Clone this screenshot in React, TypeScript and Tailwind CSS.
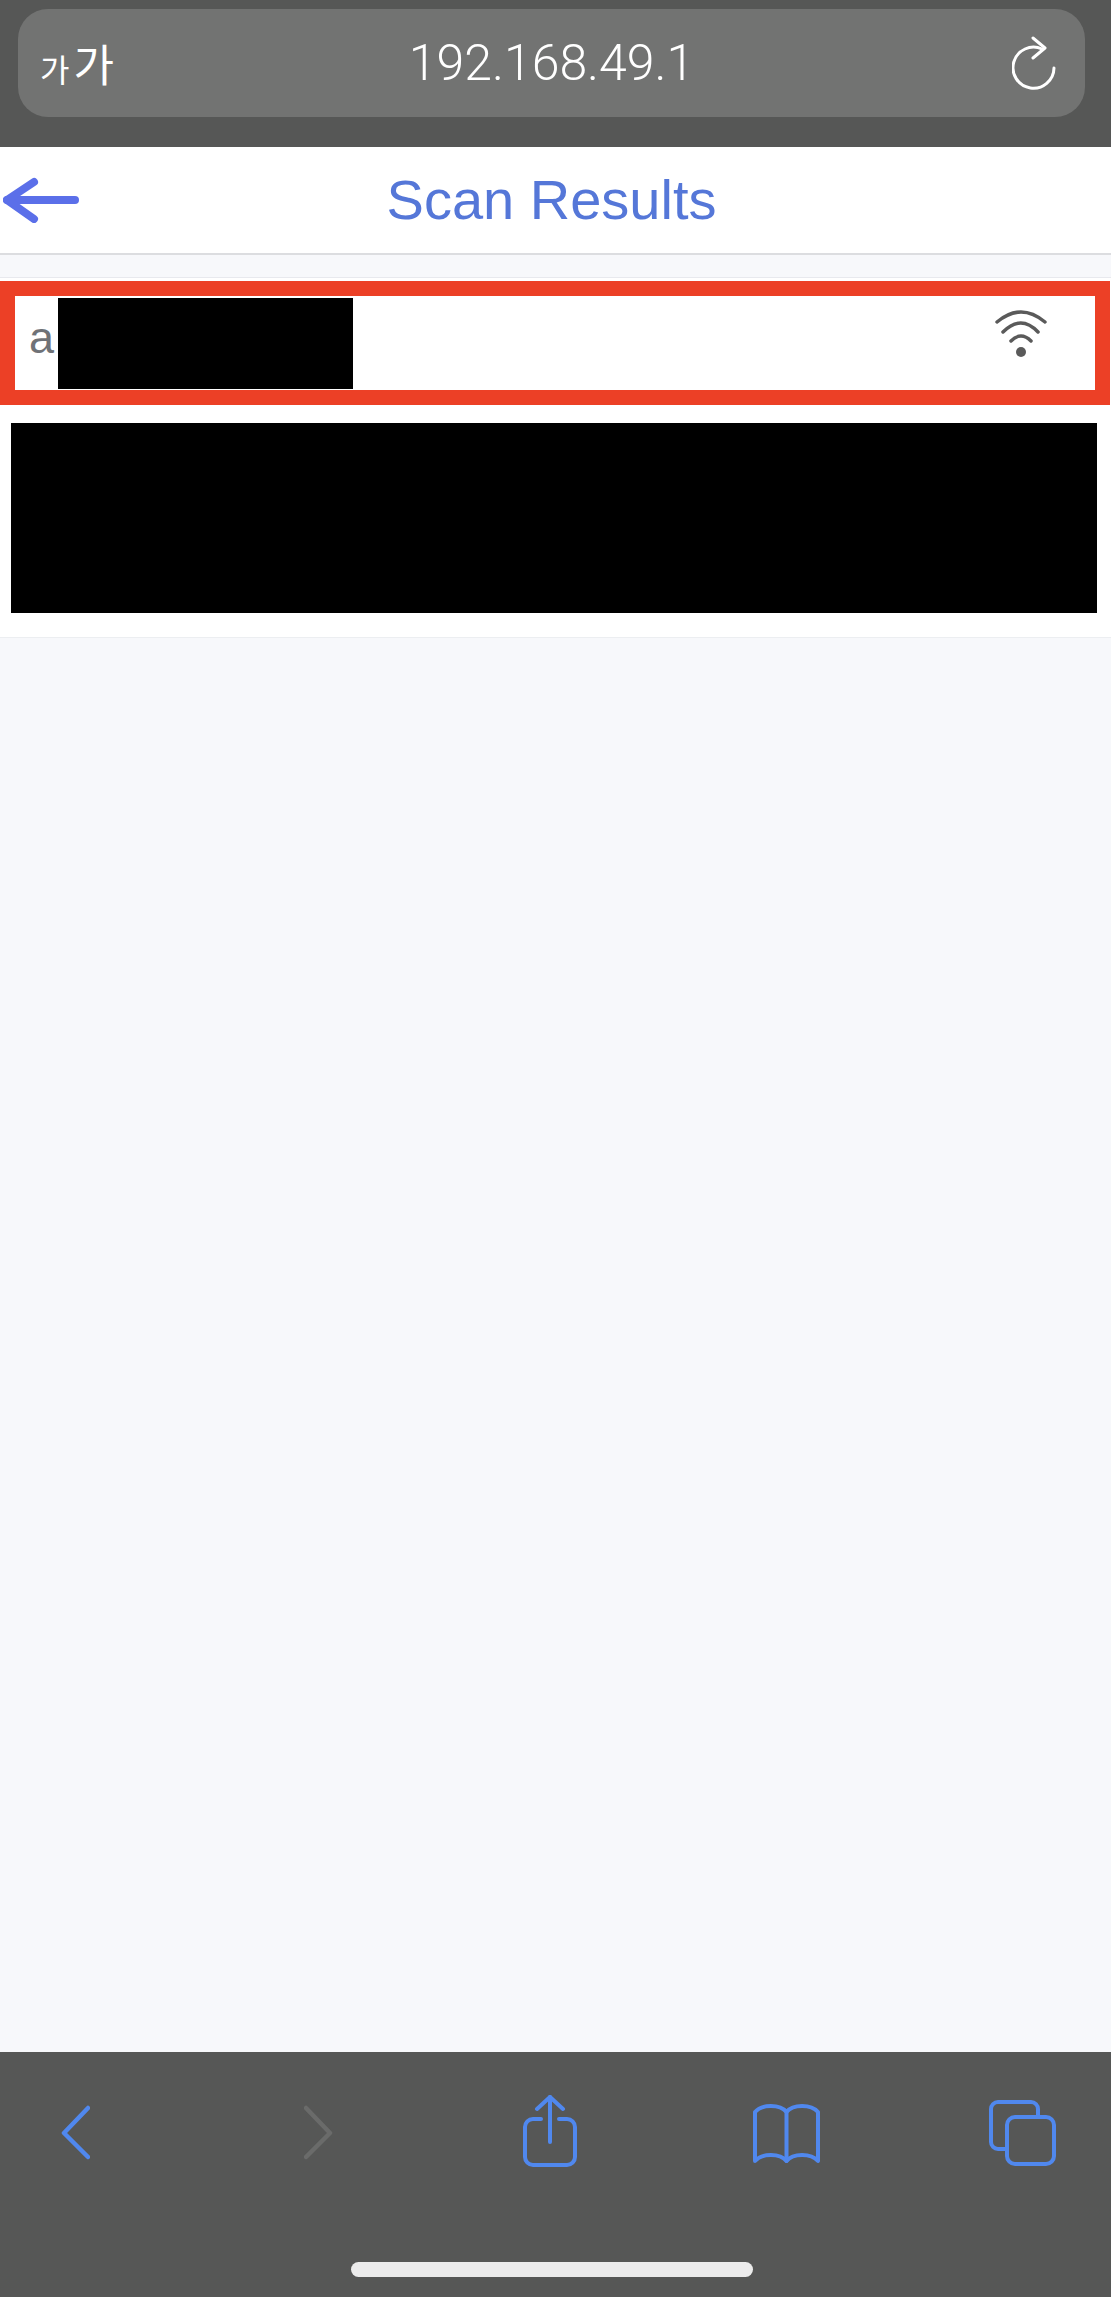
import React from "react";

const sans = "font-['Liberation_Sans',Arial,sans-serif]";

const App = () => {
    return (
        <div className={`flex h-[2297px] w-[1111px] flex-col overflow-hidden bg-[#f7f8fb] ${sans}`}>
            {/* Safari address bar */}
            <div className="h-[147px] shrink-0 bg-[#565756] pl-[18px] pr-[26px] pt-[9px]">
                <div className="grid h-[108px] grid-cols-[1fr_auto_1fr] items-center rounded-[30px] bg-[#727372] text-white">
                    <div className="flex items-baseline pl-[22px] font-['Noto_Sans_CJK_KR',sans-serif] font-normal leading-none">
                        <span className="text-[32px]">가</span>
                        <span className="ml-[4px] text-[44px]">가</span>
                    </div>
                    <div className="font-['Roboto',sans-serif] text-[50px] font-light leading-none">192.168.49.1</div>
                    <div className="flex justify-end pr-[29px]">
                        <svg width="44" height="54" viewBox="0 0 44 54" fill="none" stroke="white" strokeWidth="3" strokeLinecap="round" strokeLinejoin="round">
                            <path d="M30 13A20.5 20.5 0 1 0 42 32" />
                            <path d="M21 2L33 12L21 22" />
                        </svg>
                    </div>
                </div>
            </div>

            {/* Page header */}
            <div className="grid h-[108px] shrink-0 grid-cols-[1fr_auto_1fr] items-center border-b-2 border-[#dcdde0] bg-white pr-[8px]">
                <div className="pl-[3px]">
                    <svg width="78" height="46" viewBox="0 0 78 46" fill="none" stroke="#5b6fe9" strokeWidth="8" strokeLinecap="round" strokeLinejoin="round">
                        <path d="M4 23H72" />
                        <path d="M31 5L4 23L31 42" />
                    </svg>
                </div>
                <h1 className="text-[56px] font-normal leading-none text-[#5577d8]">Scan Results</h1>
                <div />
            </div>

            {/* Result list */}
            <div className="mt-[22px] shrink-0 border-y border-t-[#e8e9ee] border-b-[#eceef1] bg-white pb-[24px] pt-[3px]">
                <div className="h-[124px] w-[1110px] border-[15px] border-[#ec4026] bg-white">
                    <div className="flex h-[94px] items-start pl-[14px] pr-[48px]">
                        <span className="mt-[19px] w-[29px] text-[45px] leading-none text-[#6f7277]">a</span>
                        <div className="mt-[2px] h-[91px] w-[295px] bg-black" />
                        <svg className="ml-auto mt-[13px]" width="52" height="48" viewBox="0 0 52 48" fill="none" stroke="#5a5a5a" strokeWidth="3.5" strokeLinecap="round">
                            <path d="M2 13Q26 -7 50 13" />
                            <path d="M8 23Q26 5 43 23" />
                            <path d="M16 32Q26 22 36 32" />
                            <circle cx="26" cy="43" r="5" fill="#5a5a5a" stroke="none" />
                        </svg>
                    </div>
                </div>
                <div className="ml-[11px] mt-[18px] h-[190px] w-[1086px] bg-black" />
            </div>

            <div className="flex-1" />

            {/* Safari toolbar */}
            <div className="h-[245px] shrink-0 bg-[#565756] pt-[43px]">
                <div className="flex h-[72px] items-start pl-[61px]">
                    <svg width="29" height="72" viewBox="0 0 29 72" fill="none" stroke="#5088ee" strokeWidth="4.5" strokeLinecap="round" strokeLinejoin="round">
                        <path d="M27 13L3 38L27 62" />
                    </svg>
                    <svg className="ml-[214px]" width="29" height="72" viewBox="0 0 29 72" fill="none" stroke="#6a6b6a" strokeWidth="4.5" strokeLinecap="round" strokeLinejoin="round">
                        <path d="M2 13L26 38L2 62" />
                    </svg>
                    <svg className="ml-[189px]" width="56" height="72" viewBox="0 0 56 72" fill="none" stroke="#5088ee" strokeWidth="4" strokeLinecap="round" strokeLinejoin="round">
                        <path d="M19 24H11A8 8 0 0 0 3 32V62A8 8 0 0 0 11 70H45A8 8 0 0 0 53 62V32A8 8 0 0 0 45 24H37" />
                        <path d="M28 47V2" />
                        <path d="M15 14L28 2L41 14" />
                    </svg>
                    <svg className="ml-[174px]" width="69" height="72" viewBox="0 0 69 72" fill="none" stroke="#5088ee" strokeWidth="4" strokeLinecap="round" strokeLinejoin="round">
                        <path d="M34.5 17V66" />
                        <path d="M34.5 17C28 9 10 9 3 17V66C10 58 28 58 34.5 66C41 58 59 58 66 66V17C59 9 41 9 34.5 17Z" />
                    </svg>
                    <svg className="ml-[168px]" width="67" height="72" viewBox="0 0 67 72" fill="none" stroke="#5088ee" strokeWidth="4" strokeLinecap="round" strokeLinejoin="round">
                        <path d="M49 20V14A7 7 0 0 0 42 7H9A7 7 0 0 0 2 14V47A7 7 0 0 0 9 54H16" />
                        <rect x="18" y="22" width="47" height="47" rx="8" />
                    </svg>
                </div>
                <div className="ml-[351px] mt-[95px] h-[15px] w-[402px] rounded-full bg-[#ececec]" />
            </div>
        </div>
    );
};

export default App;
